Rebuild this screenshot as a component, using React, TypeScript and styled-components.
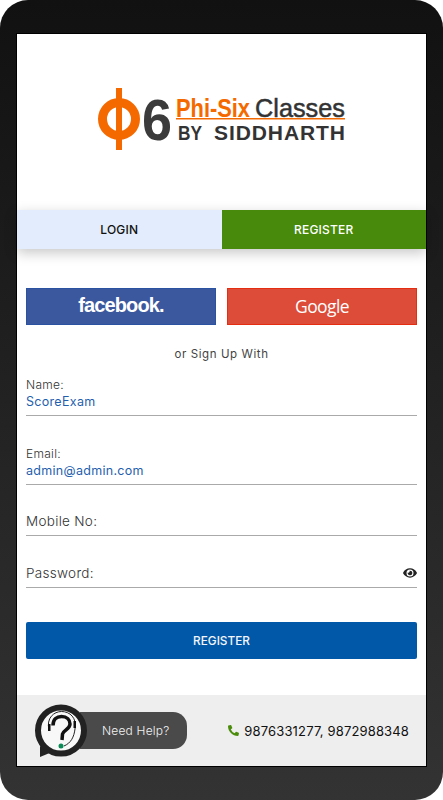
import React from 'react';
import styled, { createGlobalStyle } from 'styled-components';
import { FaEye, FaPhoneAlt } from 'react-icons/fa';

const GlobalStyle = createGlobalStyle`
    html, body {
        margin: 0;
        background: #fff;
    }
    * {
        box-sizing: border-box;
    }
`;

const Frame = styled.div`
    width: 443px;
    height: 800px;
    padding: 33px 16px;
    border-radius: 28px;
    background: linear-gradient(180deg, #111 0%, #333 100%);
    font-family: 'Inter', 'Open Sans', sans-serif;
`;

const Screen = styled.div`
    width: 411px;
    height: 734px;
    border: 1px solid #000;
    background: #fff;
    display: flex;
    flex-direction: column;
`;

const LogoArea = styled.div`
    height: 176px;
    display: flex;
    align-items: center;
    justify-content: center;
    padding: 0 0 7px 1px;
`;

const Tabs = styled.div`
    height: 39px;
    display: flex;
    box-shadow: 0 4px 12px rgba(0, 0, 0, 0.22);
`;

const Tab = styled.div<{ $active?: boolean }>`
    flex: 1;
    display: flex;
    align-items: center;
    justify-content: center;
    font-size: 12px;
    font-weight: 500;
    letter-spacing: 0.2px;
    color: ${props => (props.$active ? '#fff' : '#111')};
    background: ${props => (props.$active ? '#488a0b' : '#e3ecfc')};
`;

const Form = styled.div`
    flex: 1;
    padding: 39px 9px 0;
`;

const Socials = styled.div`
    display: flex;
    gap: 11px;
`;

const SocialButton = styled.div<{ $color: string; $edge: string }>`
    flex: 1;
    height: 37px;
    padding-bottom: 2px;
    display: flex;
    align-items: center;
    justify-content: center;
    color: #fff;
    background: ${props => props.$color};
    border: 1px solid ${props => props.$edge};
`;

const FacebookMark = styled.span`
    font-family: 'Liberation Sans', Arial, sans-serif;
    font-weight: 700;
    font-size: 20px;
    letter-spacing: -0.9px;
`;

const GoogleMark = styled.span`
    font-family: 'Open Sans', sans-serif;
    font-size: 17.5px;
    letter-spacing: -0.6px;
`;

const OrText = styled.div`
    margin-top: 21px;
    text-align: center;
    font-size: 11.5px;
    line-height: 16px;
    letter-spacing: 0.6px;
    color: #444;
`;

const Field = styled.div<{ $top: number; $height: number }>`
    position: relative;
    margin-top: ${props => props.$top}px;
    height: ${props => props.$height}px;
    border-bottom: 1px solid #aaa;
    display: flex;
    flex-direction: column;
    justify-content: flex-end;
`;

const SmallLabel = styled.div`
    font-size: 12px;
    font-weight: 300;
    line-height: 16px;
    letter-spacing: 0.3px;
    color: #333;
`;

const Value = styled.div`
    font-size: 12.5px;
    line-height: 18px;
    padding-bottom: 4px;
    letter-spacing: 0.3px;
    color: #1f5fae;
`;

const BigLabel = styled.div`
    font-size: 13.5px;
    font-weight: 300;
    line-height: 20px;
    padding-bottom: 4px;
    letter-spacing: 0.3px;
    color: #333;
`;

const EyeIcon = styled(FaEye)`
    position: absolute;
    right: 0;
    bottom: 7px;
    width: 14px;
    height: 14px;
    color: #222;
`;

const SubmitButton = styled.div`
    margin-top: 34px;
    height: 37px;
    display: flex;
    align-items: center;
    justify-content: center;
    border-radius: 2px;
    background: #0258a8;
    color: #f2f6fb;
    font-size: 11.8px;
    font-weight: 500;
`;

const Footer = styled.div`
    height: 71px;
    background: #eee;
    display: flex;
    align-items: center;
    justify-content: space-between;
    padding: 0 17px;
`;

const Help = styled.div`
    display: flex;
    align-items: center;
`;

const HelpBubble = styled.svg`
    position: relative;
    z-index: 1;
    width: 54px;
    height: 55px;
    margin-top: 2px;
`;

const HelpPill = styled.div`
    width: 107px;
    height: 37px;
    margin-left: -8px;
    padding-left: 22px;
    display: flex;
    align-items: center;
    border-radius: 0 14px 14px 0;
    background: #4a4a4a;
    color: #f4f4f4;
    font-size: 12px;
    font-weight: 300;
    letter-spacing: 0.2px;
`;

const Phone = styled.div`
    display: flex;
    align-items: center;
    gap: 5px;
    font-size: 13px;
    letter-spacing: 0.15px;
    color: #111;
`;

const PhoneIcon = styled(FaPhoneAlt)`
    width: 11px;
    height: 11px;
    color: #4a8c0a;
`;

const LogoSvg = styled.svg`
    display: block;
    width: 250px;
    height: 62px;
`;

const Logo = () => (
    <LogoSvg viewBox="0 0 250 62">
        <circle cx="22" cy="31" r="16.5" fill="none" stroke="#f56a00" strokeWidth="9" />
        <rect x="19" y="0" width="6" height="62" fill="#f56a00" />
        <text x="45" y="51.5" fontFamily="Liberation Sans, sans-serif" fontWeight="700" fontSize="57" textLength="30" lengthAdjust="spacingAndGlyphs" fill="#3b3b3b">
            6
        </text>
        <text x="79" y="28.5" fontFamily="Liberation Sans, sans-serif" fontWeight="700" fontSize="26" textLength="74" lengthAdjust="spacingAndGlyphs" fill="#f56a00">
            Phi-Six
        </text>
        <text x="158" y="28.5" fontFamily="Liberation Sans, sans-serif" fontSize="26" textLength="90" lengthAdjust="spacingAndGlyphs" stroke="#333" strokeWidth="0.5" fill="#333">
            Classes
        </text>
        <rect x="79" y="30" width="169" height="1.5" fill="#f56a00" />
        <text x="81" y="52" fontFamily="Liberation Sans, sans-serif" fontWeight="700" fontSize="21" textLength="24" lengthAdjust="spacingAndGlyphs" fill="#333">
            BY
        </text>
        <text x="117" y="52" fontFamily="Liberation Sans, sans-serif" fontWeight="700" fontSize="21" textLength="131" lengthAdjust="spacing" fill="#333">
            SIDDHARTH
        </text>
    </LogoSvg>
);

const HelpIcon = () => (
    <HelpBubble viewBox="0 0 54 55">
        <path d="M6 42 L6 53 L18 48 Z" fill="#222" />
        <circle cx="27" cy="26.5" r="23" fill="#f7f8f7" stroke="#222" strokeWidth="6" />
        <path d="M19 21.5 C19 15 23 12.5 27.5 12.5 C33 12.5 36 16 36 20 C36 25 30 26 28.5 30 L28 36" fill="none" stroke="#111" strokeWidth="3.5" />
        <path d="M15 26 C12 14 20 7.5 27.5 7.5 C36 7.5 43 14 41 25 C40 33 37 39 30 42" fill="none" stroke="#222" strokeWidth="1" />
        <rect x="14" y="20" width="2.5" height="7" fill="#111" />
        <rect x="39.5" y="17" width="2.5" height="7" fill="#111" />
        <circle cx="27" cy="42" r="2.5" fill="#0b8a55" />
    </HelpBubble>
);

const App = () => (
    <Frame>
        <GlobalStyle />
        <Screen>
            <LogoArea>
                <Logo />
            </LogoArea>
            <Tabs>
                <Tab>LOGIN</Tab>
                <Tab $active>REGISTER</Tab>
            </Tabs>
            <Form>
                <Socials>
                    <SocialButton $color="#3b579d" $edge="#2a52a0">
                        <FacebookMark>facebook.</FacebookMark>
                    </SocialButton>
                    <SocialButton $color="#dd4b39" $edge="#e52d12">
                        <GoogleMark>Google</GoogleMark>
                    </SocialButton>
                </Socials>
                <OrText>or Sign Up With</OrText>
                <Field $top={8} $height={46}>
                    <SmallLabel>Name:</SmallLabel>
                    <Value>ScoreExam</Value>
                </Field>
                <Field $top={23} $height={46}>
                    <SmallLabel>Email:</SmallLabel>
                    <Value>admin@admin.com</Value>
                </Field>
                <Field $top={23} $height={28}>
                    <BigLabel>Mobile No:</BigLabel>
                </Field>
                <Field $top={24} $height={28}>
                    <BigLabel>Password:</BigLabel>
                    <EyeIcon />
                </Field>
                <SubmitButton>REGISTER</SubmitButton>
            </Form>
            <Footer>
                <Help>
                    <HelpIcon />
                    <HelpPill>Need Help?</HelpPill>
                </Help>
                <Phone>
                    <PhoneIcon />
                    9876331277, 9872988348
                </Phone>
            </Footer>
        </Screen>
    </Frame>
);

export default App;
